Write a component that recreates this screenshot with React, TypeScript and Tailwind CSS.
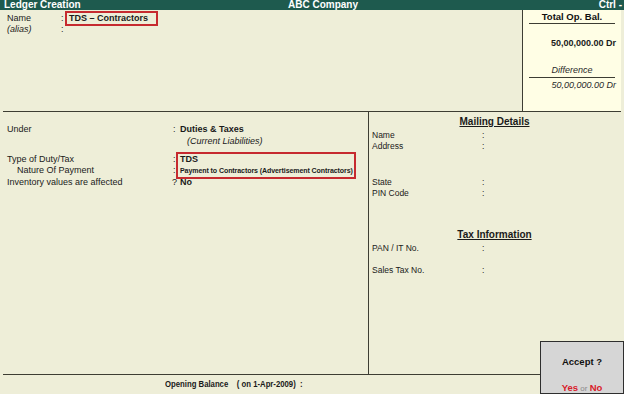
import React from "react";

export default function App() {
  return (
    <div className="relative w-[624px] h-[394px] overflow-hidden bg-[#eeeed8] font-['Liberation_Sans',Arial,sans-serif] text-[9px] leading-[11px] text-[#1a1a1a] flex flex-col">
      {/* Title bar */}
      <div className="h-[10px] shrink-0 bg-[#1e5a4e] text-white font-bold text-[10px] leading-[9px] grid grid-cols-[1fr_auto_1fr] pl-[4px] pr-[2px] overflow-hidden">
        <div>Ledger Creation</div>
        <div className="pl-[20px]">ABC Company</div>
        <div className="text-right">Ctrl -</div>
      </div>

      {/* Top section */}
      <div className="h-[102px] shrink-0 flex ml-[3px] mr-[3px] border-b border-[#3d3d33]">
        <div className="flex-1 pl-[4px] pt-[3px] leading-[11px]">
          <div className="flex">
            <div className="w-[54px]">Name</div>
            <div className="w-[5px]">:</div>
            <span className="font-bold pl-[2px] pr-[8px] outline-2 outline-[#c62a2f] ml-[1px]">TDS – Contractors</span>
          </div>
          <div className="flex">
            <div className="w-[54px] italic">(alias)</div>
            <div className="w-[5px]">:</div>
          </div>
        </div>
        <div className="w-[99px] border-l border-[#3d3d33] bg-[#fffee5] flex flex-col items-center pt-[1px]">
          <div className="font-bold text-[9.5px] leading-[11px] text-[#111]">Total Op. Bal.</div>
          <div className="w-[86px] h-[1px] bg-[#3d3d33] mt-[1px]" />
          <div className="self-end pr-[5px] mt-[14px] font-bold text-[9px] leading-[11px]">50,00,000.00 Dr</div>
          <div className="italic leading-[11px] mt-[16px] text-[#2a2a2a]">Difference</div>
          <div className="w-[86px] h-[1px] bg-[#3d3d33] mt-[1px]" />
          <div className="self-end pr-[5px] mt-[2px] italic leading-[11px] text-[#2a2a2a]">50,00,000.00 Dr</div>
        </div>
      </div>

      {/* Middle section */}
      <div className="flex-1 flex ml-[3px] mr-[3px]">
        <div className="w-[366px] border-r border-[#3d3d33] pl-[4px] pt-[12px] leading-[11.5px]">
          <div className="flex">
            <div className="w-[166px]">Under</div>
            <div className="w-[7px]">:</div>
            <div>
              <div className="font-bold">Duties &amp; Taxes</div>
              <div className="italic pl-[7px]">(Current Liabilities)</div>
            </div>
          </div>
          <div className="flex mt-[6.5px]">
            <div className="w-[166px]">
              <div>Type of Duty/Tax</div>
              <div className="pl-[10px]">Nature Of Payment</div>
            </div>
            <div className="w-[5px]">
              <div>:</div>
              <div>:</div>
            </div>
            <div className="w-[176px] pl-[2px] outline-2 outline-[#c62a2f]">
              <div className="font-bold">TDS</div>
              <div className="font-bold text-[8px] origin-left scale-x-[0.88] whitespace-nowrap tracking-[-0.1px]">
                Payment to Contractors (Advertisement Contractors)
              </div>
            </div>
          </div>
          <div className="flex">
            <div className="w-[165px]">Inventory values are affected</div>
            <div className="w-[8px]">?</div>
            <div className="font-bold">No</div>
          </div>
        </div>
        <div className="flex-1 pl-[3px] pt-[4px] text-[8.5px] leading-[10.5px]">
          <div className="text-center font-bold underline text-[10px] leading-[12px] pr-[4px]">Mailing Details</div>
          <div className="flex mt-[2px]">
            <div className="w-[110px]">Name</div>
            <div>:</div>
          </div>
          <div className="flex">
            <div className="w-[110px]">Address</div>
            <div>:</div>
          </div>
          <div className="flex mt-[26px]">
            <div className="w-[110px]">State</div>
            <div>:</div>
          </div>
          <div className="flex">
            <div className="w-[110px]">PIN Code</div>
            <div>:</div>
          </div>
          <div className="text-center font-bold underline text-[10px] leading-[12px] pr-[4px] mt-[31px]">Tax Information</div>
          <div className="flex mt-[2px]">
            <div className="w-[110px]">PAN / IT No.</div>
            <div>:</div>
          </div>
          <div className="flex mt-[11px]">
            <div className="w-[110px]">Sales Tax No.</div>
            <div>:</div>
          </div>
        </div>
      </div>

      {/* Bottom bar */}
      <div className="h-[20px] shrink-0 ml-[3px] mr-[3px] border-t border-[#3d3d33] flex items-center pl-[162px] font-bold text-[9px]">
        <span className="inline-block origin-left scale-x-[0.86] whitespace-nowrap">
          Opening Balance&nbsp;&nbsp;&nbsp;&nbsp;( on 1-Apr-2009)&nbsp;&nbsp;:
        </span>
      </div>

      {/* Accept box */}
      <div className="absolute right-0 bottom-0 w-[84px] h-[53px] bg-[#d6d6d6] border border-[#2e2e2e] flex flex-col items-center">
        <div className="font-bold text-[9.5px] leading-[11px] mt-[14px] text-[#111]">Accept ?</div>
        <div className="mt-[15px] text-[9.5px] leading-[11px] font-bold">
          <span className="text-[#d9202a]">Yes</span>
          <span className="font-normal text-[#8a8a8a] text-[8px]"> or </span>
          <span className="text-[#d9202a]">No</span>
        </div>
      </div>
    </div>
  );
}
